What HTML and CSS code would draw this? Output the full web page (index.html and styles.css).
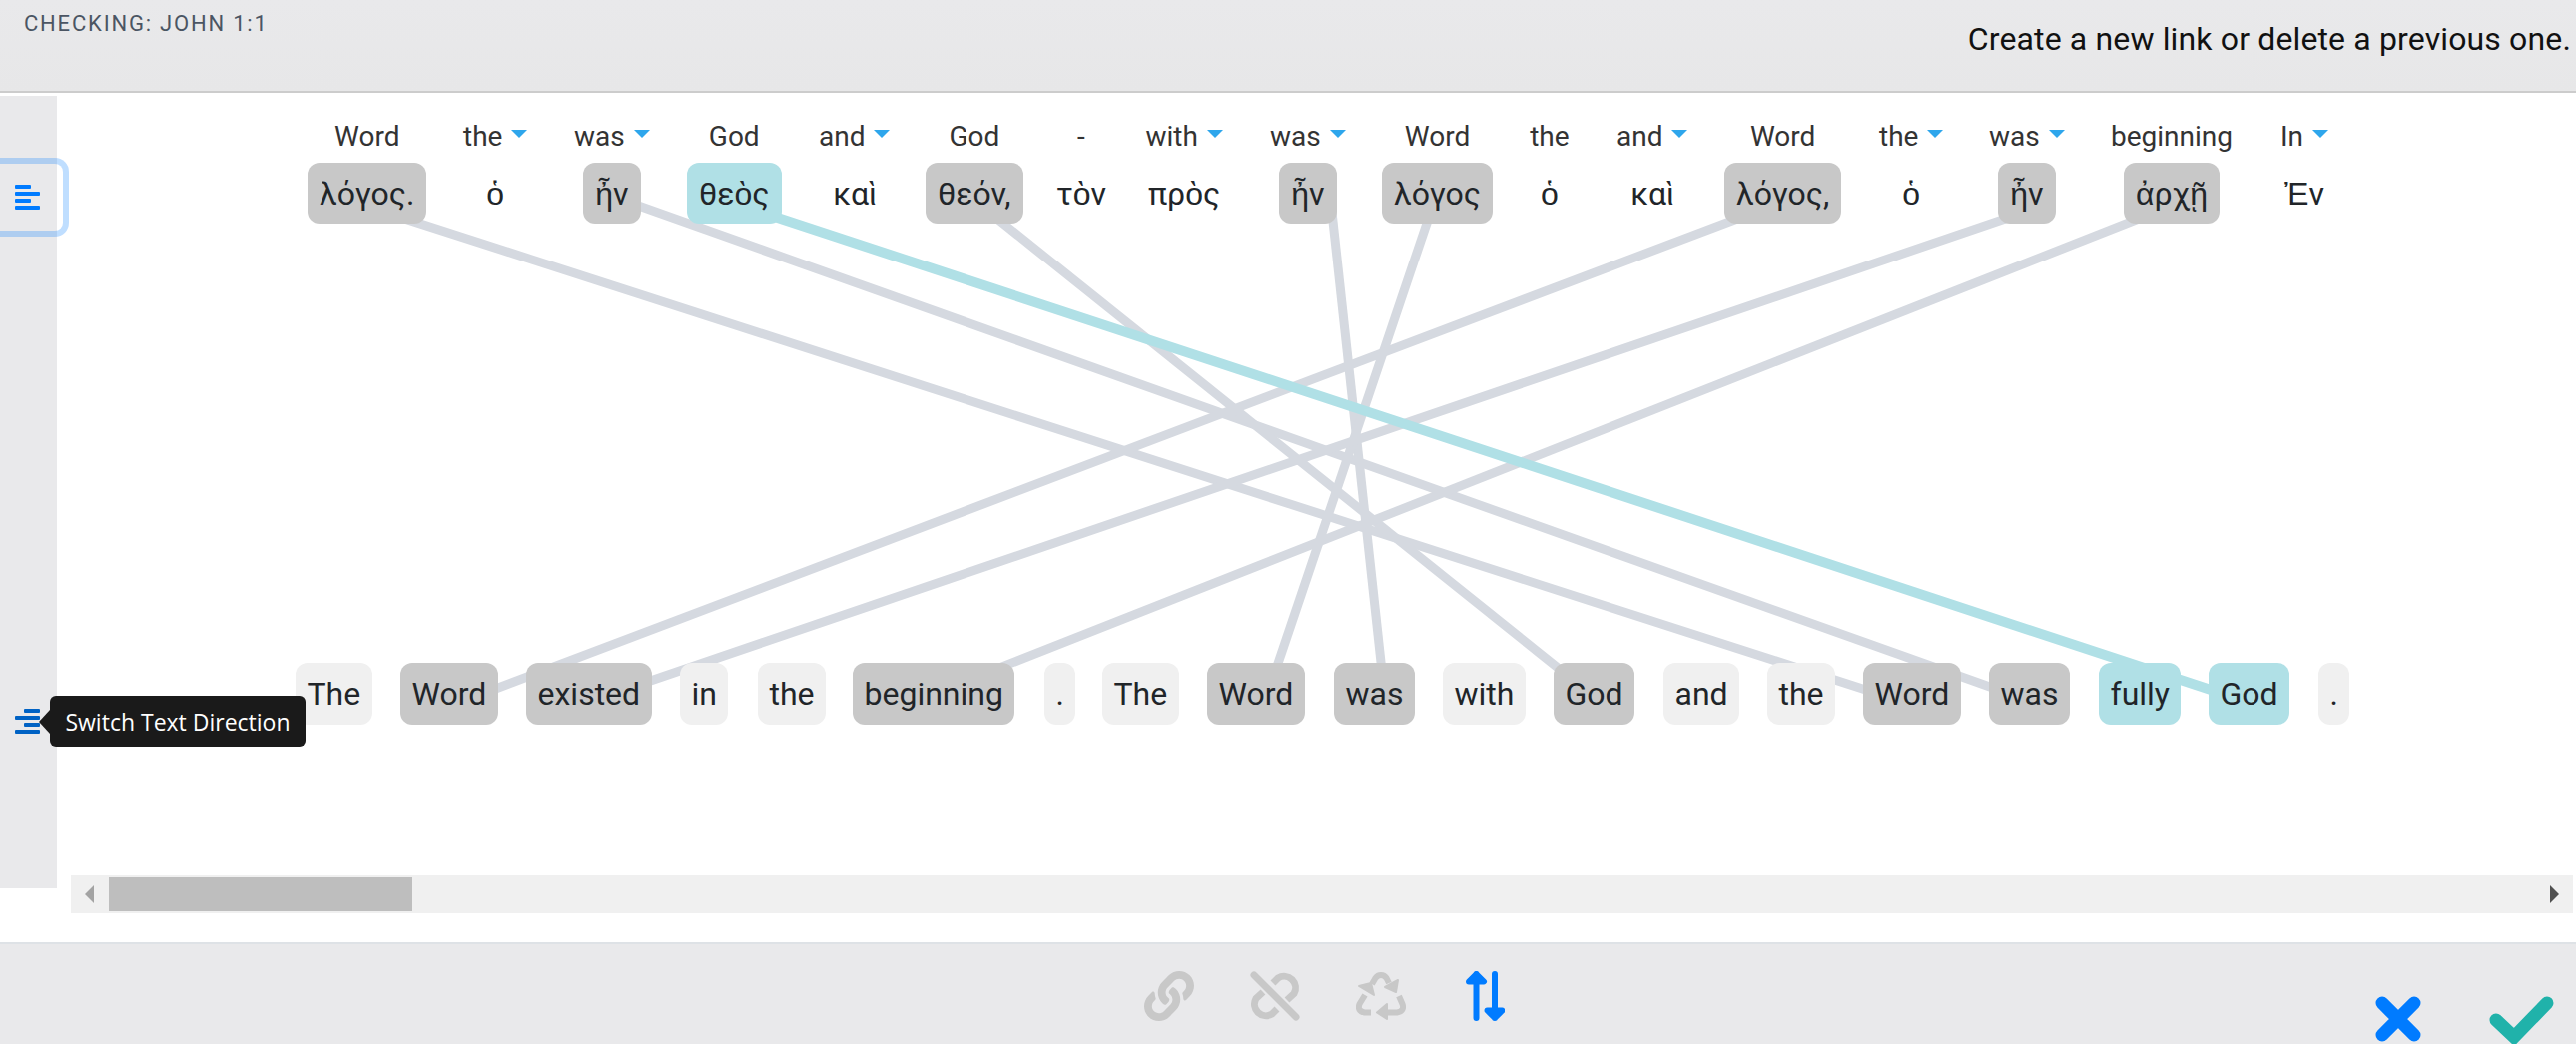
FILE: index.html
```html
<!DOCTYPE html>
<html lang="en">
<head>
<meta charset="utf-8">
<title>Checking: John 1:1</title>
<link rel="stylesheet" href="styles.css">
</head>
<body>
<header class="header">
  <div class="ref">CHECKING: JOHN 1:1</div>
  <div class="hint">Create a new link or delete a previous one.</div>
</header>
<main class="main">
  <svg class="links" viewBox="0 93 2580 851" aria-hidden="true">
    <g class="link-line">
      <line x1="367" y1="206.6" x2="1915" y2="706"/>
      <line x1="612" y1="196.2" x2="2032" y2="702"/>
      <line x1="976" y1="200.8" x2="1596" y2="697.7"/>
      <line x1="1332" y1="194" x2="1387" y2="700"/>
      <line x1="1439" y1="194" x2="1268" y2="700"/>
      <line x1="1785" y1="202" x2="449" y2="708"/>
      <line x1="2029" y1="212" x2="590" y2="703"/>
      <line x1="2175" y1="206" x2="935" y2="695"/>
    </g>
    <line class="link-line-active" x1="734" y1="203.2" x2="2252" y2="703.5"/>
  </svg>
  <nav class="rail">
    <button class="rail-btn rail-btn-focus" type="button">
      <svg class="bars" viewBox="0 0 25 25"><rect x="0" y="0" width="16" height="4" rx="1"/><rect x="0" y="7" width="25" height="4" rx="1"/><rect x="0" y="14" width="16" height="4" rx="1"/><rect x="0" y="21" width="25" height="4" rx="1"/></svg>
    </button>
    <button class="rail-btn rail-btn-hover" type="button">
      <svg class="bars bars-dark" viewBox="0 0 25 25"><rect x="9" y="0" width="16" height="4" rx="1"/><rect x="0" y="7" width="25" height="4" rx="1"/><rect x="9" y="14" width="16" height="4" rx="1"/><rect x="0" y="21" width="25" height="4" rx="1"/></svg>
    </button>
    <div class="tooltip">Switch Text Direction</div>
  </nav>
  <section class="canvas">
    <div class="source-row">
      <div class="col"><div class="gloss">Word</div><div class="chip linked">λόγος.</div></div>
      <div class="col"><div class="gloss">the<i class="caret"></i></div><div class="chip"><span class="poly">ὁ</span></div></div>
      <div class="col"><div class="gloss">was<i class="caret"></i></div><div class="chip linked"><span class="poly">ἦ</span>ν</div></div>
      <div class="col"><div class="gloss">God</div><div class="chip active">θε<span class="poly">ὸ</span>ς</div></div>
      <div class="col"><div class="gloss">and<i class="caret"></i></div><div class="chip">κα<span class="poly">ὶ</span></div></div>
      <div class="col"><div class="gloss">God</div><div class="chip linked">θεόν,</div></div>
      <div class="col"><div class="gloss">-</div><div class="chip">τ<span class="poly">ὸ</span>ν</div></div>
      <div class="col"><div class="gloss">with<i class="caret"></i></div><div class="chip">πρ<span class="poly">ὸ</span>ς</div></div>
      <div class="col"><div class="gloss">was<i class="caret"></i></div><div class="chip linked"><span class="poly">ἦ</span>ν</div></div>
      <div class="col"><div class="gloss">Word</div><div class="chip linked">λόγος</div></div>
      <div class="col"><div class="gloss">the</div><div class="chip"><span class="poly">ὁ</span></div></div>
      <div class="col"><div class="gloss">and<i class="caret"></i></div><div class="chip">κα<span class="poly">ὶ</span></div></div>
      <div class="col"><div class="gloss">Word</div><div class="chip linked">λόγος,</div></div>
      <div class="col"><div class="gloss">the<i class="caret"></i></div><div class="chip"><span class="poly">ὁ</span></div></div>
      <div class="col"><div class="gloss">was<i class="caret"></i></div><div class="chip linked"><span class="poly">ἦ</span>ν</div></div>
      <div class="col"><div class="gloss">beginning</div><div class="chip linked"><span class="poly">ἀ</span>ρχ<span class="poly">ῇ</span></div></div>
      <div class="col"><div class="gloss">In<i class="caret"></i></div><div class="chip"><span class="poly">Ἐ</span>ν</div></div>
    </div>
    <div class="target-row">
      <div class="chip tall plain">The</div>
      <div class="chip tall linked">Word</div>
      <div class="chip tall linked">existed</div>
      <div class="chip tall plain">in</div>
      <div class="chip tall plain">the</div>
      <div class="chip tall linked">beginning</div>
      <div class="chip tall plain">.</div>
      <div class="chip tall plain">The</div>
      <div class="chip tall linked">Word</div>
      <div class="chip tall linked">was</div>
      <div class="chip tall plain">with</div>
      <div class="chip tall linked">God</div>
      <div class="chip tall plain">and</div>
      <div class="chip tall plain">the</div>
      <div class="chip tall linked">Word</div>
      <div class="chip tall linked">was</div>
      <div class="chip tall active">fully</div>
      <div class="chip tall active">God</div>
      <div class="chip tall plain">.</div>
    </div>
    <div class="scrollbar">
      <i class="arrow-left"></i>
      <div class="thumb"></div>
      <i class="arrow-right"></i>
    </div>
  </section>
</main>
<footer class="footer">
  <div class="tools">
    <svg class="tool muted-fill" viewBox="0 0 512 512"><path d="M326.612 185.391c59.747 59.809 58.927 155.698.36 214.59-.11.12-.24.25-.36.37l-67.2 67.2c-59.27 59.27-155.699 59.262-214.96 0-59.27-59.26-59.27-155.7 0-214.96l37.106-37.106c9.84-9.84 26.786-3.3 27.294 10.606.648 17.722 3.826 35.527 9.69 52.721 1.986 5.822.567 12.262-3.783 16.612l-13.087 13.087c-28.026 28.026-28.905 73.66-1.155 101.96 28.024 28.579 74.086 28.749 102.325.51l67.2-67.19c28.191-28.191 28.073-73.757 0-101.83-3.701-3.694-7.429-6.564-10.341-8.569a16.037 16.037 0 0 1-6.947-12.606c-.396-10.567 3.348-21.456 11.698-29.806l21.054-21.055c5.521-5.521 14.182-6.199 20.584-1.731a152.482 152.482 0 0 1 20.522 17.197zM467.547 44.449c-59.261-59.262-155.69-59.27-214.96 0l-67.2 67.2c-.12.12-.25.25-.36.37-58.566 58.892-59.387 154.781.36 214.59a152.454 152.454 0 0 0 20.521 17.196c6.402 4.468 15.064 3.789 20.584-1.731l21.054-21.055c8.35-8.35 12.094-19.239 11.698-29.806a16.037 16.037 0 0 0-6.947-12.606c-2.912-2.005-6.64-4.875-10.341-8.569-28.073-28.073-28.191-73.639 0-101.83l67.2-67.19c28.239-28.239 74.3-28.069 102.325.51 27.75 28.3 26.872 73.934-1.155 101.96l-13.087 13.087c-4.35 4.35-5.769 10.79-3.783 16.612 5.864 17.194 9.042 34.999 9.69 52.721.509 13.906 17.454 20.446 27.294 10.606l37.106-37.106c59.271-59.259 59.271-155.699.001-214.959z"/></svg>
    <svg class="tool muted-stroke" viewBox="0 0 50 50"><path d="M23 12 L28 7 A11.5 11.5 0 0 1 44 22.5 L37 29"/><path d="M27 38 L22 43 A11.5 11.5 0 0 1 6 27.5 L13 21"/><path class="slash" d="M4 4 L46 46"/></svg>
    <svg class="tool muted-stroke recycle" viewBox="0 0 50 50"><path d="M16 13 L19.5 7 Q21.5 4 25 4 Q28.5 4 30.5 7 L33 12"/><path class="head" d="M42 9 L40 21 L29 16 Z"/><path d="M9 24 L3.5 33 Q1 40 8.5 41.5 L15 41.5"/><path class="head" d="M3 15 L15 12 L18 24 Z"/><path d="M31 41.5 L41 41.5 Q49 40 46.5 33 L43 25"/><path class="head" d="M31 33 L21 41.5 L31 48 Z"/></svg>
    <svg class="tool tool-narrow blue-stroke" viewBox="0 0 39 50"><path d="M10.5 3 V47 M3 10.5 L10.5 3 L18 10.5 Z"/><path d="M29 3 V47 M21.5 39.5 L29 47 L36.5 39.5 Z"/></svg>
  </div>
  <div class="verdict">
    <svg class="cancel" viewBox="0 0 46 46"><path d="M7 7 L39 39 M39 7 L7 39"/></svg>
    <svg class="accept" viewBox="0 0 65 60"><path d="M7 24 L25 41 L58 7"/></svg>
  </div>
</footer>
</body>
</html>
```
FILE: styles.css
```css
* { box-sizing: border-box; }
html, body { margin: 0; height: 100%; }
body {
  width: 2580px;
  height: 1046px;
  overflow: hidden;
  background: #fff;
  font-family: Roboto, "Noto Sans", sans-serif;
  color: #212529;
  display: flex;
  flex-direction: column;
}

.header {
  height: 93px;
  flex: none;
  display: flex;
  justify-content: space-between;
  align-items: flex-start;
  background: linear-gradient(#e9e9eb, #e7e7e8);
  border-bottom: 2px solid #cccccc;
  padding: 11px 5px 0 24px;
}
.ref {
  font-size: 22px;
  line-height: 26px;
  font-weight: 400;
  letter-spacing: 1.8px;
  color: #4b5563;
}
.hint {
  font-size: 32px;
  line-height: 38px;
  margin-top: 9px;
  letter-spacing: .14px;
  color: #111;
}

.main {
  flex: none;
  height: 851px;
  display: flex;
  position: relative;
}
.links {
  position: absolute;
  left: 0;
  top: 0;
  width: 2580px;
  height: 851px;
}
.link-line line { stroke: #d5d9e0; stroke-width: 9; }
.link-line-active { stroke: #b0e0e6; stroke-width: 10; }

.rail {
  flex: none;
  width: 57px;
  height: 794px;
  margin-top: 3px;
  background: #e9e9eb;
  position: relative;
  z-index: 2;
}
.rail-btn {
  display: flex;
  align-items: center;
  justify-content: center;
  border: 0;
  background: transparent;
  padding: 0;
}
.rail-btn-focus {
  width: 63px;
  height: 67px;
  margin-top: 68px;
  padding-right: 8px;
  border-radius: 0 8px 8px 0;
  box-shadow: 0 0 0 6px rgba(0, 123, 255, .25);
}
.rail-btn-hover {
  width: 55px;
  height: 25px;
  margin-top: 479px;
}
.bars { width: 25px; height: 25px; fill: #007bff; }
.bars-dark { fill: #0062c4; }

.tooltip {
  position: absolute;
  left: 50px;
  top: 601px;
  width: 256px;
  height: 51px;
  border-radius: 6px;
  background: #1a1a1a;
  color: #fff;
  font-family: "Open Sans", "Noto Sans", sans-serif;
  font-size: 23px;
  line-height: 52px;
  text-align: center;
  white-space: nowrap;
}
.tooltip::before {
  content: "";
  position: absolute;
  left: -11px;
  top: 14px;
  border-style: solid;
  border-width: 12px 11px 12px 0;
  border-color: transparent #1a1a1a transparent transparent;
}

.canvas {
  flex: 1;
  min-width: 0;
  position: relative;
  z-index: 1;
  padding-top: 27px;
}
.source-row {
  display: grid;
  grid-template-columns: 156px 111px 113px 132px 107px 119px 92px 134px 112px 147px 88px 108px 155px 110px 122px 162px auto;
  justify-items: start;
  padding-left: 251px;
}
.col {
  display: flex;
  flex-direction: column;
  align-items: center;
  gap: 10px;
}
.gloss {
  font-size: 28px;
  line-height: 33px;
  color: #333;
  white-space: nowrap;
  display: flex;
  align-items: flex-start;
}
.caret {
  width: 0;
  height: 0;
  margin: 10px 0 0 9px;
  border-style: solid;
  border-width: 8px 8.5px 0;
  border-color: #2ea6ec transparent transparent;
}
.chip {
  height: 61px;
  padding: 0 12px;
  border-radius: 12px;
  font-size: 32px;
  line-height: 62px;
  white-space: nowrap;
}
.poly { font-family: "Liberation Sans", Arial, sans-serif; }
.tall { height: 62px; padding: 0 11.5px; }
.plain { background: #f0f0f0; }
.linked { background: #c8c8c8; }
.active { background: #b0e0e6; }

.target-row {
  display: grid;
  grid-template-columns: 105px 126px 154px 78px 95px 192px 58px 105px 127px 109px 111px 110px 104px 96px 126px 110px 110px 110px auto;
  justify-items: start;
  margin-top: 440px;
  padding-left: 239px;
}

.scrollbar {
  height: 38px;
  margin: 151px 3px 0 14px;
  background: #f0f0f0;
  display: flex;
  align-items: center;
  padding: 0 14px 0 14px;
}
.thumb {
  width: 304px;
  height: 34px;
  margin-left: 15px;
  background: #bebebe;
}
.arrow-left, .arrow-right {
  width: 0;
  height: 0;
  border-style: solid;
  border-width: 9px 0;
}
.arrow-left { border-right: 9px solid #a3a3a3; border-top-color: transparent; border-bottom-color: transparent; }
.arrow-right { border-left: 9px solid #505050; border-top-color: transparent; border-bottom-color: transparent; margin-left: auto; }

.footer {
  flex: 1;
  min-height: 0;
  overflow: hidden;
  background: #e9e9eb;
  border-top: 2px solid #dee2e6;
  display: flex;
  justify-content: space-between;
  align-items: flex-start;
  padding: 27px 22px 0 1146px;
}
.tools { display: flex; gap: 56px; align-items: flex-start; }
.tool { width: 50px; height: 50px; display: block; }
.tool-narrow { width: 39px; margin-left: 4px; }
.muted-fill { fill: #c8c8c8; }
.muted-stroke { fill: none; stroke: #c8c8c8; stroke-width: 7; stroke-linecap: butt; }
.muted-stroke .slash { stroke-linecap: round; }
.recycle { stroke-width: 6; stroke-linejoin: round; }
.recycle .head { fill: #c8c8c8; stroke-width: 2; }
.blue-stroke { fill: #007bff; stroke: #007bff; stroke-width: 6; stroke-linecap: round; stroke-linejoin: round; }
.verdict { display: flex; gap: 68px; margin-top: 25px; }
.cancel { width: 46px; height: 46px; display: block; fill: none; stroke: #007bff; stroke-width: 13; stroke-linecap: round; }
.accept { width: 65px; height: 60px; display: block; fill: none; stroke: #20b2aa; stroke-width: 13; stroke-linecap: round; stroke-linejoin: miter; }
```
